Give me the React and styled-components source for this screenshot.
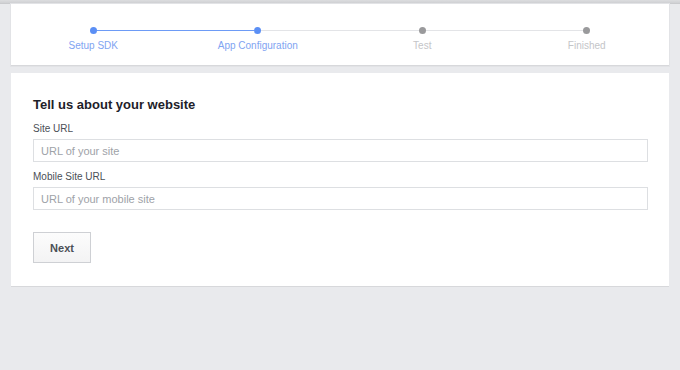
import styled, { createGlobalStyle } from "styled-components";

const steps = [
  { label: "Setup SDK", done: true },
  { label: "App Configuration", done: true },
  { label: "Test", done: false },
  { label: "Finished", done: false },
];

function App() {
  return (
    <>
      <GlobalStyle />
      <Page>
        <TopBar />
        <Card>
          <Stepper>
            {steps.map((step, i) => (
              <Step key={step.label}>
                <Track>
                  <Line $hidden={i === 0} $active={step.done} />
                  <Dot $active={step.done} />
                  <Line
                    $hidden={i === steps.length - 1}
                    $active={steps[i + 1] && steps[i + 1].done}
                  />
                </Track>
                <StepLabel $active={step.done}>{step.label}</StepLabel>
              </Step>
            ))}
          </Stepper>
        </Card>
        <FormCard>
          <Heading>Tell us about your website</Heading>
          <Label>Site URL</Label>
          <Input placeholder="URL of your site" />
          <Label>Mobile Site URL</Label>
          <Input placeholder="URL of your mobile site" />
          <Actions>
            <Button>Next</Button>
          </Actions>
        </FormCard>
      </Page>
    </>
  );
}

const GlobalStyle = createGlobalStyle`
  body {
    margin: 0;
    background: #e9eaed;
    font-family: "Liberation Sans", Arial, sans-serif;
  }
`;

const Page = styled.div`
  min-height: 370px;
  background: #e9eaed;
  display: flex;
  flex-direction: column;
`;

const TopBar = styled.div`
  height: 4px;
  background: linear-gradient(#dcdddf, #cfd0d3);
  border-bottom: 1px solid #c9cacd;
  box-sizing: border-box;
`;

const Card = styled.div`
  margin: 0 11px;
  background: #fff;
  border-bottom: 1px solid #d7d8db;
  box-shadow: 0 0 0 1px #e2e3e6;
`;

const Stepper = styled.div`
  display: grid;
  grid-template-columns: repeat(4, 1fr);
  padding: 23px 0 14px;
`;

const Step = styled.div`
  display: flex;
  flex-direction: column;
  align-items: center;
`;

const Track = styled.div`
  width: 100%;
  height: 7px;
  display: flex;
  align-items: center;
`;

const Line = styled.div`
  flex: 1;
  height: 1px;
  background: ${(p) =>
    p.$hidden ? "transparent" : p.$active ? "#6d9bf6" : "#e3e4e7"};
`;

const Dot = styled.div`
  width: 7px;
  height: 7px;
  border-radius: 50%;
  background: ${(p) => (p.$active ? "#5b8ff5" : "#9a9a9c")};
`;

const StepLabel = styled.div`
  margin-top: 6px;
  font-size: 10px;
  color: ${(p) => (p.$active ? "#7fa4f2" : "#c4c5c8")};
`;

const FormCard = styled.div`
  margin: 7px 11px 0;
  background: #fff;
  border-bottom: 1px solid #d7d8db;
  padding: 24px 21px 23px 22px;
  display: flex;
  flex-direction: column;
`;

const Heading = styled.div`
  font-size: 13px;
  font-weight: bold;
  color: #1d2129;
  margin-bottom: 11px;
`;

const Label = styled.div`
  font-size: 10px;
  color: #4b4f56;
  margin-bottom: 5px;
`;

const Input = styled.input`
  height: 23px;
  box-sizing: border-box;
  border: 1px solid #dddfe2;
  padding: 0 7px;
  font-family: inherit;
  font-size: 11px;
  margin-bottom: 9px;
  outline: none;
  &::placeholder {
    color: #9ea2a8;
  }
`;

const Actions = styled.div`
  margin-top: 13px;
  display: flex;
`;

const Button = styled.button`
  width: 58px;
  height: 31px;
  background: linear-gradient(#fcfcfc, #f3f3f4);
  border: 1px solid #ced0d4;
  font-family: inherit;
  font-size: 11px;
  font-weight: bold;
  color: #4b4f56;
`;

export default App;
